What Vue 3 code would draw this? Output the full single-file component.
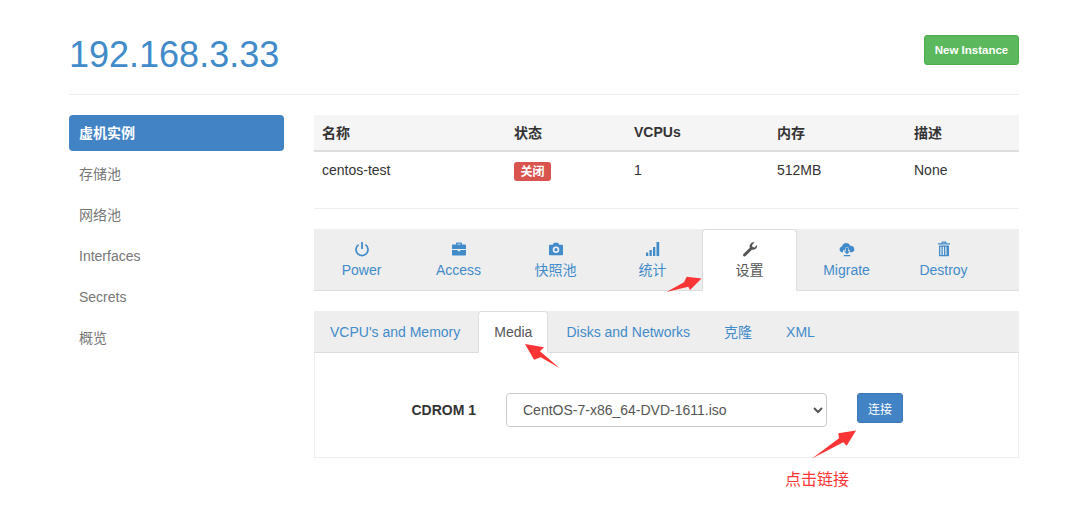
<script setup>
const menu = [
  { label: '虚机实例', active: true },
  { label: '存储池' },
  { label: '网络池' },
  { label: 'Interfaces' },
  { label: 'Secrets' },
  { label: '概览' },
]

const actions = [
  { label: 'Power', icon: 'power' },
  { label: 'Access', icon: 'case' },
  { label: '快照池', icon: 'camera' },
  { label: '统计', icon: 'stats' },
  { label: '设置', icon: 'wrench', active: true },
  { label: 'Migrate', icon: 'cloud' },
  { label: 'Destroy', icon: 'trash' },
]

const subTabs = [
  { label: "VCPU's and Memory" },
  { label: 'Media', active: true },
  { label: 'Disks and Networks' },
  { label: '克隆' },
  { label: 'XML' },
]
</script>

<template>
  <div class="page">
    <header class="page-header">
      <h1>192.168.3.33</h1>
      <button class="btn-new">New Instance</button>
    </header>

    <div class="main">
      <nav class="side">
        <a v-for="item in menu" :key="item.label" class="side-item" :class="{ active: item.active }">
          {{ item.label }}
        </a>
      </nav>

      <section class="content">
        <table class="vm-table">
          <thead>
            <tr>
              <th class="c1">名称</th>
              <th class="c2">状态</th>
              <th class="c3">VCPUs</th>
              <th class="c4">内存</th>
              <th>描述</th>
            </tr>
          </thead>
          <tbody>
            <tr>
              <td>centos-test</td>
              <td class="status"><span class="label">关闭</span></td>
              <td>1</td>
              <td>512MB</td>
              <td>None</td>
            </tr>
          </tbody>
        </table>

        <div class="rule"></div>

        <ul class="action-tabs">
          <li v-for="tab in actions" :key="tab.label" class="action-tab" :class="{ active: tab.active }">
            <svg class="ico" viewBox="0 0 16 16" aria-hidden="true">
              <template v-if="tab.icon === 'power'">
                <path d="M4.600 3.600a6 6 0 1 0 6.800 0" fill="none" stroke="currentColor" stroke-width="1.700" />
                <rect x="7.100" y="1" width="1.800" height="7" fill="currentColor" />
              </template>
              <template v-else-if="tab.icon === 'case'">
                <path fill="currentColor" fill-rule="evenodd" d="M5 3.500V2.600C5 2 5.500 1.600 6 1.600h4c.5 0 1 .4 1 1v.9h3c.6 0 1 .4 1 1v3.400H1V4.500c0-.6.4-1 1-1h3zm1.300 0h3.400v-.7H6.300v.7z" />
                <path fill="currentColor" d="M1 9h5.800v1.200h2.400V9H15v4.400c0 .6-.4 1-1 1H2c-.6 0-1-.4-1-1V9z" />
              </template>
              <template v-else-if="tab.icon === 'camera'">
                <path fill="currentColor" fill-rule="evenodd" d="M2 3.800h2.700L6 1.800h4l1.300 2H14c.6 0 1 .4 1 1v8.400c0 .6-.4 1-1 1H2c-.6 0-1-.4-1-1V4.800c0-.6.4-1 1-1zM8 5.400a3.300 3.300 0 1 0 0 6.600 3.300 3.300 0 0 0 0-6.600zm0 1.700a1.600 1.600 0 1 1 0 3.200 1.600 1.600 0 0 1 0-3.200z" />
              </template>
              <template v-else-if="tab.icon === 'stats'">
                <path fill="currentColor" d="M1 11.500h2.300V15H1zM4.500 9h2.300v6H4.500zM8 6h2.300v9H8zM11.500 1h2.700v14h-2.700z" />
              </template>
              <template v-else-if="tab.icon === 'wrench'">
                <path fill="currentColor" d="M1.400 13l6.400-6.300c-.5-1.700-.1-3.300 1-4.300 1-1 2.400-1.300 3.700-.9L10 3.900l.5 2 2 .5 2.400-2.500c.4 1.300 0 2.800-1 3.800-1.100 1-2.500 1.400-4 1l-6.300 6.400c-.5.5-1.300.5-1.900.1l-.3-.3c-.5-.5-.5-1.400 0-1.900z" />
              </template>
              <template v-else-if="tab.icon === 'cloud'">
                <path fill="currentColor" d="M4 11.300H3.600C1.900 11.300.6 10 .6 8.400c0-1.400 1-2.600 2.300-2.800C3.300 3.500 5 2 7.200 2c1.900 0 3.500 1.100 4.100 2.800 2.200-.2 4.100 1.400 4.100 3.400 0 1.700-1.300 3.100-3 3.100H11V9.200H9.500V6.500h-3v2.700H4v2.100z" />
                <path fill="currentColor" d="M7 7h2v3.200h2L8 13.300 5 10.200h2zM4.800 14h6.400v1.200H4.800z" />
              </template>
              <template v-else>
                <path fill="currentColor" fill-rule="evenodd" d="M5.500 2.200V1.500c0-.5.4-.9.900-.9h3.200c.5 0 .9.400.9.900v.7H14v1.400H2V2.200h3.500zm1.200 0h2.600v-.5H6.700v.5z" />
                <path fill="currentColor" fill-rule="evenodd" d="M3 4.500h10v9.700c0 .6-.4 1.100-1 1.100H4c-.6 0-1-.5-1-1.100V4.500zm1.300 1.200v8.300h1.200V5.700H4.300zm2.500 0v8.300h1.200V5.700H6.800zm2.500 0v8.300h1.200V5.700H9.300z" />
              </template>
            </svg>
            <span>{{ tab.label }}</span>
          </li>
        </ul>

        <ul class="sub-tabs">
          <li v-for="tab in subTabs" :key="tab.label" class="sub-tab" :class="{ active: tab.active }">
            {{ tab.label }}
          </li>
        </ul>

        <div class="panel">
          <label class="field-label">CDROM 1</label>
          <select class="field-select">
            <option>CentOS-7-x86_64-DVD-1611.iso</option>
          </select>
          <button class="btn-connect">连接</button>
        </div>
      </section>
    </div>

    <!-- red annotations drawn over the screenshot -->
    <svg class="arrows" width="1082" height="525" aria-hidden="true">
      <path fill="#fb3535" d="M666.500 292L684 282.300 686.700 276.700 701.500 278.500 690 290 688.300 286.700z" />
      <path fill="#fb3535" d="M559.500 368L540.700 357.300 534 359.700 525 344 544 347.300 540 351.300z" />
      <path fill="#fb3535" d="M812 458.500L839 438.300 838.300 433.300 856 430.500 846.700 445.700 843.300 442.300z" />
    </svg>
    <span class="note">点击链接</span>
  </div>
</template>

<style>
html,
body {
  background: #fff;
}
</style>

<style scoped>
.page {
  position: relative;
  width: 1082px;
  height: 525px;
  box-sizing: border-box;
  padding: 0 63px 0 69px;
  overflow: hidden;
  font-family: "Liberation Sans", "Noto Sans CJK SC", sans-serif;
  font-size: 14px;
  color: #333;
}

.page-header {
  display: flex;
  justify-content: space-between;
  align-items: flex-start;
  height: 95px;
  box-sizing: border-box;
  border-bottom: 1px solid #eee;
}

.page-header h1 {
  margin: 34px 0 0;
  font-size: 36px;
  line-height: 42px;
  font-weight: 400;
  color: #428bca;
}

.btn-new {
  margin-top: 35px;
  width: 95px;
  height: 30px;
  padding: 0;
  border: 1px solid #4cae4c;
  border-radius: 3px;
  background: #5cb85c;
  color: #fff;
  font-family: inherit;
  font-size: 11.5px;
  font-weight: 700;
}

.main {
  display: flex;
  gap: 30px;
  padding-top: 20px;
}

.side {
  width: 215px;
  flex-shrink: 0;
  display: flex;
  flex-direction: column;
  gap: 5px;
}

.side-item {
  height: 36px;
  line-height: 36px;
  padding: 0 10px;
  border-radius: 4px;
  color: #777;
}

.side-item.active {
  background: #4183c4;
  color: #fff;
  font-weight: 700;
}

.content {
  flex: 1;
  min-width: 0;
}

.vm-table {
  width: 100%;
  border-collapse: collapse;
  table-layout: fixed;
}

.vm-table th {
  box-sizing: border-box;
  height: 36px;
  padding: 0 8px 2px;
  background: #f5f5f5;
  border-bottom: 2px solid #ddd;
  text-align: left;
  font-weight: 700;
}

.vm-table td {
  box-sizing: border-box;
  height: 38px;
  padding: 0 8px 2px;
  vertical-align: middle;
}

.vm-table td.status {
  padding: 1px 8px 0;
}

.c1 {
  width: 192px;
}

.c2 {
  width: 120px;
}

.c3 {
  width: 143px;
}

.c4 {
  width: 137px;
}

.label {
  display: inline-block;
  padding: 2px 6.5px 1px;
  border-radius: 3px;
  background: #d9534f;
  color: #fff;
  font-size: 12px;
  line-height: 16px;
  font-weight: 700;
}

.rule {
  margin-top: 19px;
  border-top: 1px solid #eee;
}

.action-tabs {
  list-style: none;
  display: flex;
  gap: 2px;
  height: 62px;
  margin: 20px 0 0;
  padding: 0;
  box-sizing: border-box;
  background: #eee;
  border-bottom: 1px solid #ddd;
}

.action-tab {
  width: 95px;
  height: 62px;
  box-sizing: border-box;
  display: flex;
  flex-direction: column;
  align-items: center;
  padding-top: 11px;
  color: #428bca;
  border: 1px solid transparent;
  border-radius: 4px 4px 0 0;
}

.action-tab span {
  margin-top: 4px;
  line-height: 18px;
}

.action-tab.active {
  background: #fff;
  border-color: #ddd;
  border-bottom-color: #fff;
  color: #555;
}

.ico {
  width: 16px;
  height: 16px;
  display: block;
}

.sub-tabs {
  list-style: none;
  display: flex;
  gap: 2px;
  height: 42px;
  margin: 20px 0 0;
  padding: 0;
  box-sizing: border-box;
  background: #eee;
  border-bottom: 1px solid #ddd;
}

.sub-tab {
  height: 42px;
  box-sizing: border-box;
  padding: 0 15px;
  line-height: 40px;
  color: #428bca;
  border: 1px solid transparent;
  border-radius: 4px 4px 0 0;
}

.sub-tab.active {
  background: #fff;
  border-color: #ddd;
  border-bottom-color: #fff;
  color: #555;
}

.panel {
  height: 105px;
  box-sizing: border-box;
  border: 1px solid #eee;
  border-top: 0;
  display: flex;
  align-items: flex-start;
  padding-top: 40px;
}

.field-label {
  width: 161px;
  text-align: right;
  line-height: 34px;
  font-weight: 700;
}

.field-select {
  width: 321px;
  height: 34px;
  margin-left: 30px;
  padding: 6px 12px;
  box-sizing: border-box;
  background: #fff;
  border: 1px solid #ccc;
  border-radius: 4px;
  font-family: inherit;
  font-size: 14px;
  color: #555;
}

.btn-connect {
  width: 46px;
  height: 30px;
  margin-left: 30px;
  padding: 0;
  border: 1px solid #3b78b5;
  border-radius: 3px;
  background: #4183c4;
  color: #fff;
  font-family: inherit;
  font-size: 12px;
}

.arrows {
  position: absolute;
  left: 0;
  top: 0;
  pointer-events: none;
}

.note {
  position: absolute;
  left: 785px;
  top: 470px;
  font-size: 16px;
  line-height: 20px;
  color: #fb3535;
}
</style>
